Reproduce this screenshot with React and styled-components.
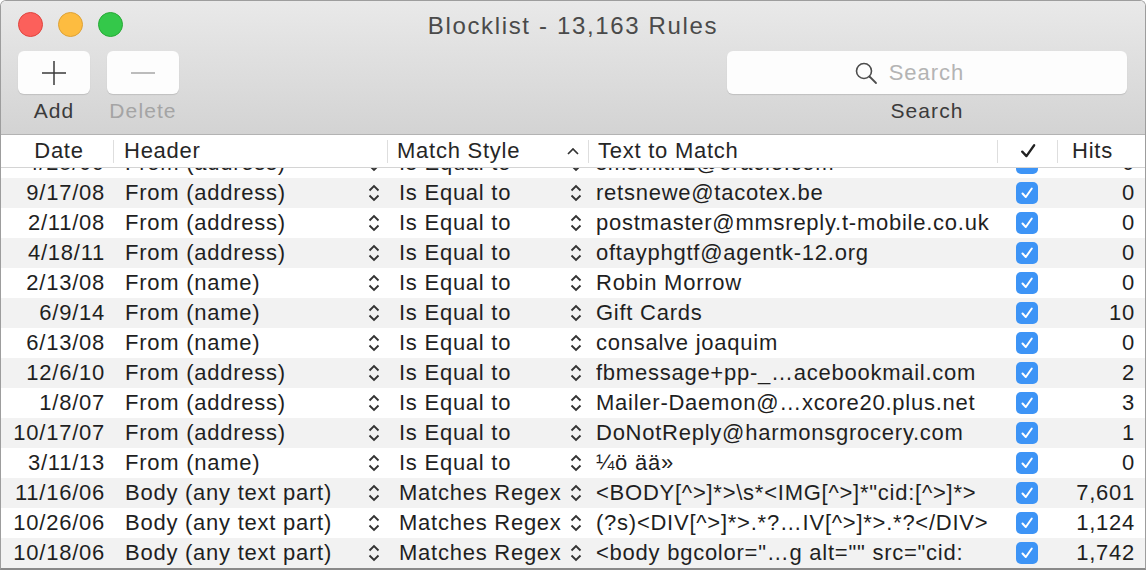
import styled, { createGlobalStyle } from 'styled-components';

const GlobalStyle = createGlobalStyle`
  html, body {
    margin: 0;
    padding: 0;
    background: #ffffff;
  }
  body {
    font-family: "Liberation Sans", Arial, sans-serif;
    -webkit-font-smoothing: antialiased;
  }
`;

const Window = styled.div`
  width: 1146px;
  height: 570px;
  box-sizing: border-box;
  border: 1px solid #9d9d9d;
  border-bottom: 2px solid #8a8a8a;
  border-radius: 6px 6px 0 0;
  overflow: hidden;
  display: flex;
  flex-direction: column;
  background: #ffffff;
`;

const Chrome = styled.div`
  height: 133px;
  flex-shrink: 0;
  background: linear-gradient(#e9e9e9, #d3d3d3);
  border-bottom: 1px solid #b3b3b3;
  display: flex;
  flex-direction: column;
`;

const TitleRow = styled.div`
  height: 47px;
  display: grid;
  grid-template-columns: 1fr auto 1fr;
  align-items: center;
`;

const Lights = styled.div`
  display: flex;
  gap: 15px;
  padding-left: 17px;
`;

const Light = styled.span`
  width: 25px;
  height: 25px;
  border-radius: 50%;
  box-sizing: border-box;
  background: ${(p) => p.$color};
  border: 1px solid ${(p) => p.$edge};
`;

const Title = styled.div`
  font-size: 24px;
  letter-spacing: 1.65px;
  color: #4a4a4a;
  padding-top: 2px;
`;

const ToolRow = styled.div`
  display: flex;
  align-items: flex-start;
  padding: 3px 18px 0 17px;
  gap: 17px;
`;

const ToolItem = styled.div`
  display: flex;
  flex-direction: column;
  align-items: center;
  margin-left: ${(p) => (p.$push ? 'auto' : '0')};
`;

const ToolButton = styled.div`
  width: ${(p) => p.$width}px;
  height: 43px;
  box-sizing: border-box;
  padding-right: ${(p) => p.$shift || 0}px;
  background: #fdfdfd;
  border-radius: 6px;
  box-shadow: 0 1px 1px rgba(0, 0, 0, 0.12);
  display: flex;
  align-items: center;
  justify-content: center;
  gap: 11px;
`;

const ToolLabel = styled.div`
  margin-top: 4px;
  font-size: 21px;
  letter-spacing: 1.1px;
  line-height: 26px;
  color: ${(p) => (p.$disabled ? '#a4a4a4' : '#3b3b3b')};
`;

const Placeholder = styled.span`
  font-size: 22px;
  letter-spacing: 1px;
  color: #b4b4b4;
`;

const Table = styled.div`
  flex: 1;
  display: flex;
  flex-direction: column;
  min-height: 0;
`;

const columns = '112px 274px 201px 409px 60px 1fr';

const HeaderRow = styled.div`
  height: 32px;
  flex-shrink: 0;
  display: grid;
  grid-template-columns: ${columns};
  align-items: center;
  border-bottom: 1px solid #d4d4d4;
  background: #ffffff;
  position: relative;
  z-index: 1;
`;

const HeadCell = styled.div`
  height: 23px;
  box-sizing: border-box;
  display: flex;
  align-items: center;
  justify-content: ${(p) => p.$justify || 'flex-start'};
  padding: 0 ${(p) => p.$right || 0}px 0 ${(p) => p.$left || 0}px;
  border-left: ${(p) => (p.$first ? 'none' : '1px solid #dedede')};
  font-size: 22px;
  letter-spacing: 0.75px;
  color: #262626;
  gap: 6px;
  white-space: nowrap;
`;

const HeadText = styled.span`
  flex: ${(p) => (p.$grow ? 1 : 'none')};
`;

const Body = styled.div`
  flex: 1;
  overflow: hidden;
`;

const Rows = styled.div`
  margin-top: -20px;
`;

const Row = styled.div`
  height: 30px;
  display: grid;
  grid-template-columns: ${columns};
  align-items: center;
  background: ${(p) => (p.$striped ? '#f2f2f2' : '#ffffff')};
  font-size: 22px;
  letter-spacing: 0.75px;
  color: #1f1f1f;
`;

const Cell = styled.div`
  display: flex;
  align-items: center;
  justify-content: ${(p) => p.$justify || 'flex-start'};
  padding: 0 ${(p) => p.$right || 0}px 0 ${(p) => p.$left || 0}px;
  white-space: nowrap;
  overflow: hidden;
  min-width: 0;
`;

const CellText = styled.span`
  flex: ${(p) => (p.$grow ? 1 : 'none')};
  overflow: hidden;
`;

const CheckBox = styled.span`
  width: 22px;
  height: 22px;
  border-radius: 5px;
  background: #3d94f6;
  display: flex;
  align-items: center;
  justify-content: center;
  margin-right: 1px;
`;

function Stepper() {
  return (
    <svg width="14" height="22" viewBox="0 0 14 22">
      <path d="M2.5 8.5 L7 4 L11.5 8.5" fill="none" stroke="#333" strokeWidth="1.9" />
      <path d="M2.5 13.5 L7 18 L11.5 13.5" fill="none" stroke="#333" strokeWidth="1.9" />
    </svg>
  );
}

function SortUp() {
  return (
    <svg width="14" height="10" viewBox="0 0 14 10">
      <path d="M2 8 L7 3 L12 8" fill="none" stroke="#333" strokeWidth="1.7" />
    </svg>
  );
}

function Tick({ color = '#fff', size = 14, width = 2 }) {
  return (
    <svg width={size} height={size} viewBox="0 0 14 14">
      <path d="M2.5 7.5 L5.8 11 L11.8 2.5" fill="none" stroke={color} strokeWidth={width} strokeLinecap="round" strokeLinejoin="round" />
    </svg>
  );
}

function PlusIcon() {
  return (
    <svg width="26" height="26" viewBox="0 0 26 26">
      <path d="M13 1 V25 M1 13 H25" stroke="#3a3a3a" strokeWidth="1.5" />
    </svg>
  );
}

function MinusIcon() {
  return (
    <svg width="26" height="26" viewBox="0 0 26 26">
      <path d="M1 13 H25" stroke="#a6a6a6" strokeWidth="1.5" />
    </svg>
  );
}

function SearchIcon() {
  return (
    <svg width="24" height="24" viewBox="0 0 24 24">
      <circle cx="10" cy="10" r="7.5" fill="none" stroke="#4d4d4d" strokeWidth="1.6" />
      <path d="M15.5 15.5 L22 22" stroke="#4d4d4d" strokeWidth="1.8" strokeLinecap="round" />
    </svg>
  );
}

const rules = [
  ['4/25/09', 'From (address)', 'Is Equal to', 'smsmith2@oracle.com', '0'],
  ['9/17/08', 'From (address)', 'Is Equal to', 'retsnewe@tacotex.be', '0'],
  ['2/11/08', 'From (address)', 'Is Equal to', 'postmaster@mmsreply.t-mobile.co.uk', '0'],
  ['4/18/11', 'From (address)', 'Is Equal to', 'oftayphgtf@agentk-12.org', '0'],
  ['2/13/08', 'From (name)', 'Is Equal to', 'Robin Morrow', '0'],
  ['6/9/14', 'From (name)', 'Is Equal to', 'Gift Cards', '10'],
  ['6/13/08', 'From (name)', 'Is Equal to', 'consalve joaquim', '0'],
  ['12/6/10', 'From (address)', 'Is Equal to', 'fbmessage+pp-_…acebookmail.com', '2'],
  ['1/8/07', 'From (address)', 'Is Equal to', 'Mailer-Daemon@…xcore20.plus.net', '3'],
  ['10/17/07', 'From (address)', 'Is Equal to', 'DoNotReply@harmonsgrocery.com', '1'],
  ['3/11/13', 'From (name)', 'Is Equal to', '¼ö ää»', '0'],
  ['11/16/06', 'Body (any text part)', 'Matches Regex', '<BODY[^>]*>\\s*<IMG[^>]*"cid:[^>]*>', '7,601'],
  ['10/26/06', 'Body (any text part)', 'Matches Regex', '(?s)<DIV[^>]*>.*?…IV[^>]*>.*?</DIV>', '1,124'],
  ['10/18/06', 'Body (any text part)', 'Matches Regex', '<body bgcolor="…g alt="" src="cid:', '1,742'],
];

export default function App() {
  return (
    <>
      <GlobalStyle />
      <Window>
        <Chrome>
          <TitleRow>
            <Lights>
              <Light $color="#fc605b" $edge="#e0443e" />
              <Light $color="#fdbc40" $edge="#dea236" />
              <Light $color="#34c84a" $edge="#27aa35" />
            </Lights>
            <Title>Blocklist - 13,163 Rules</Title>
            <span />
          </TitleRow>
          <ToolRow>
            <ToolItem>
              <ToolButton $width={72}>
                <PlusIcon />
              </ToolButton>
              <ToolLabel>Add</ToolLabel>
            </ToolItem>
            <ToolItem>
              <ToolButton $width={72}>
                <MinusIcon />
              </ToolButton>
              <ToolLabel $disabled>Delete</ToolLabel>
            </ToolItem>
            <ToolItem $push>
              <ToolButton $width={400} $shift={36}>
                <SearchIcon />
                <Placeholder>Search</Placeholder>
              </ToolButton>
              <ToolLabel>Search</ToolLabel>
            </ToolItem>
          </ToolRow>
        </Chrome>

        <Table>
          <HeaderRow>
            <HeadCell $first $justify="center" $left={4}>Date</HeadCell>
            <HeadCell $left={10}>Header</HeadCell>
            <HeadCell $left={9} $right={8}>
              <HeadText $grow>Match Style</HeadText>
              <SortUp />
            </HeadCell>
            <HeadCell $left={9}>Text to Match</HeadCell>
            <HeadCell $justify="center">
              <Tick color="#222" size={18} width={1.8} />
            </HeadCell>
            <HeadCell $left={14}>Hits</HeadCell>
          </HeaderRow>
          <Body>
            <Rows>
              {rules.map((r, i) => (
                <Row key={r[0] + r[3]} $striped={i % 2 === 1}>
                  <Cell $justify="flex-end" $right={8}>{r[0]}</Cell>
                  <Cell $left={12} $right={6}>
                    <CellText $grow>{r[1]}</CellText>
                    <Stepper />
                  </Cell>
                  <Cell $left={12} $right={5}>
                    <CellText $grow>{r[2]}</CellText>
                    <Stepper />
                  </Cell>
                  <Cell $left={8}>
                    <CellText>{r[3]}</CellText>
                  </Cell>
                  <Cell $justify="center">
                    <CheckBox>
                      <Tick />
                    </CheckBox>
                  </Cell>
                  <Cell $justify="flex-end" $right={10}>{r[4]}</Cell>
                </Row>
              ))}
            </Rows>
          </Body>
        </Table>
      </Window>
    </>
  );
}
